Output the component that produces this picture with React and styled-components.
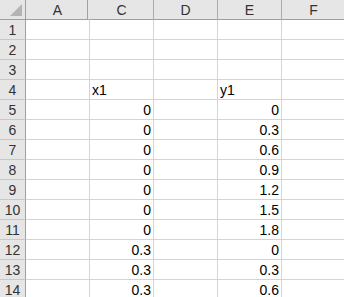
import React from "react";
import styled, { createGlobalStyle } from "styled-components";

const Global = createGlobalStyle`
  html, body { margin: 0; padding: 0; background: #fff; overflow: hidden; }
  body { font-family: "Liberation Sans", Arial, sans-serif; }
`;

const Sheet = styled.div`
  display: grid;
  grid-template-columns: 26px repeat(5, 64px);
  grid-auto-rows: 20px;
  width: 344px;
  height: 297px;
  overflow: hidden;
  font-size: 14px;
  color: #000;
`;

const Corner = styled.div`
  position: relative;
  background: #e6e6e6;
  border-right: 1px solid #9f9f9f;
  border-bottom: 1px solid #9f9f9f;
  &::after {
    content: "";
    position: absolute;
    right: 3px;
    bottom: 3px;
    width: 0;
    height: 0;
    border-left: 12px solid transparent;
    border-bottom: 12px solid #b4b4b4;
  }
`;

const ColHead = styled.div`
  position: relative;
  background: #e6e6e6;
  border-right: 1px solid ${(p) => (p.$hiddenNext ? "transparent" : "#ababab")};
  border-bottom: 1px solid #9f9f9f;
  display: flex;
  align-items: center;
  justify-content: center;
  color: #333;
  line-height: 16px;
  &::before,
  &::after {
    content: "";
    display: ${(p) => (p.$hiddenNext ? "block" : "none")};
    position: absolute;
    top: 0;
    bottom: 0;
    width: 1px;
    background: #a0a0a0;
  }
  &::before { right: 1px; }
  &::after { right: -3px; }
`;

const RowHead = styled.div`
  background: #e6e6e6;
  border-right: 1px solid #9f9f9f;
  border-bottom: 1px solid #c8c8c8;
  display: flex;
  align-items: center;
  justify-content: center;
  color: #333;
  line-height: 16px;
`;

const Cell = styled.div`
  border-right: 1px solid #d4d4d4;
  border-bottom: 1px solid #d4d4d4;
  display: flex;
  align-items: flex-end;
  justify-content: ${(p) => (p.$num ? "flex-end" : "flex-start")};
  padding: 0 2px 1px 2px;
  line-height: 16px;
  white-space: nowrap;
  overflow: hidden;
  box-sizing: border-box;
`;

const cols = ["A", "C", "D", "E", "F"];

const data = {
  4: { C: "x1", E: "y1" },
  5: { C: 0, E: 0 },
  6: { C: 0, E: 0.3 },
  7: { C: 0, E: 0.6 },
  8: { C: 0, E: 0.9 },
  9: { C: 0, E: 1.2 },
  10: { C: 0, E: 1.5 },
  11: { C: 0, E: 1.8 },
  12: { C: 0.3, E: 0 },
  13: { C: 0.3, E: 0.3 },
  14: { C: 0.3, E: 0.6 },
};

export default function App() {
  const rows = Array.from({ length: 14 }, (_, i) => i + 1);
  return (
    <>
      <Global />
      <Sheet>
        <Corner />
        {cols.map((c) => (
          <ColHead key={c} $hiddenNext={c === "A"}>
            {c}
          </ColHead>
        ))}
        {rows.map((r) => (
          <React.Fragment key={r}>
            <RowHead>{r}</RowHead>
            {cols.map((c) => {
              const v = data[r] && data[r][c];
              const has = v !== undefined;
              return (
                <Cell key={c} $num={typeof v === "number"}>
                  {has ? String(v) : ""}
                </Cell>
              );
            })}
          </React.Fragment>
        ))}
      </Sheet>
    </>
  );
}
